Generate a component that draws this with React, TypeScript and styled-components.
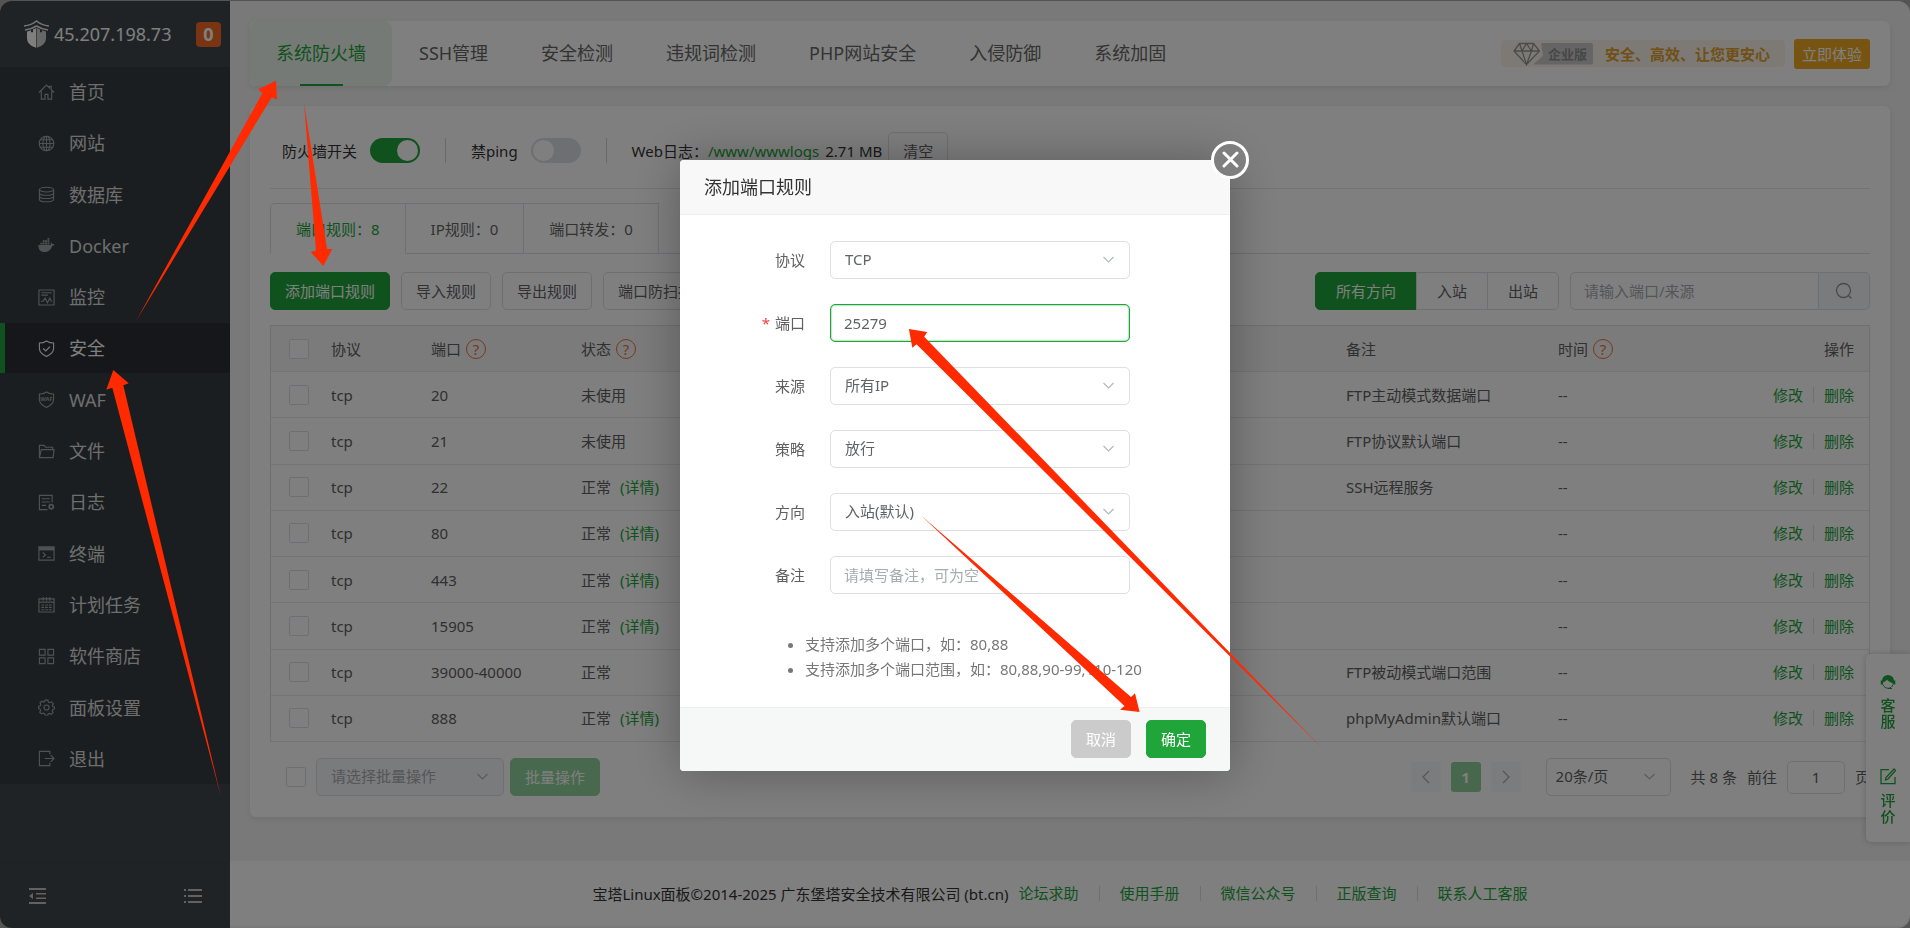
import React from 'react';
import styled, { createGlobalStyle, css } from 'styled-components';

const GlobalStyle = createGlobalStyle`
  *, *::before, *::after { box-sizing: border-box; }
  body { margin: 0; background: #a8a8aa; }
  body, button, input, select {
    font-family: "Noto Sans", "Noto Sans CJK SC", sans-serif;
    font-size: 15px;
    line-height: 20px;
    color: #606060;
  }
  button { cursor: pointer; }
  a { text-decoration: none; }
`;

const GREEN = '#20a53a';
const BORDER = '#dcdfe6';

/* ---------- shell ---------- */

const Shell = styled.div`
  display: flex;
  min-height: 100vh;
  border-top: 1px solid #a8a8aa;
`;

const Sidebar = styled.aside`
  display: flex;
  flex-direction: column;
  flex: 0 0 230px;
  background: #3f474c;
  border-radius: 12px 0 0 12px;
  overflow: hidden;
`;

const Brand = styled.div`
  display: flex;
  align-items: center;
  height: 66px;
  padding: 0 9px 0 24px;
  gap: 5px;
  color: #fff;
  font-size: 18px;
`;

const BrandName = styled.span`
  flex: 1;
`;

const Badge = styled.span`
  width: 25px;
  height: 25px;
  border-radius: 4px;
  background: #f26a22;
  font-size: 18px;
  font-weight: 700;
  line-height: 25px;
  text-align: center;
`;

const Menu = styled.nav`
  display: flex;
  flex-direction: column;
  justify-content: space-between;
  height: 717px;
  background: #363d41;
`;

const MenuLink = styled.a<{ $active?: boolean }>`
  display: flex;
  align-items: center;
  gap: 14px;
  height: 50px;
  padding-left: 33px;
  border-left: 5px solid transparent;
  font-size: 18px;
  color: #dcddde;
  svg { color: #a0a3a5; }
  ${(p) =>
    p.$active &&
    css`
      background: #2d2f35;
      border-left-color: ${GREEN};
      color: #fff;
      svg { color: #f4f4f4; }
    `}
`;

const SideTools = styled.div`
  display: flex;
  justify-content: space-between;
  align-items: center;
  height: 66px;
  margin-top: auto;
  padding: 0 28px;
  border-top: 1px solid #3b4348;
  color: #c4c4c4;
`;

const PlainButton = styled.button`
  display: flex;
  padding: 0;
  border: 0;
  background: none;
  color: inherit;
`;

const Main = styled.main`
  display: flex;
  flex-direction: column;
  flex: 1;
  min-width: 0;
  padding-bottom: 2px;
  background: #f2f2f2;
  border-radius: 0 12px 12px 0;
`;

const Card = styled.section`
  margin: 20px 20px 0;
  background: #fff;
  border-radius: 6px;
  box-shadow: 0 2px 6px rgba(0, 0, 0, 0.08);
`;

/* ---------- top navigation ---------- */

const NavCard = styled(Card)`
  display: flex;
  align-items: center;
  gap: 1px;
  height: 65px;
  padding-right: 20px;
`;

const NavLink = styled.a<{ $active?: boolean }>`
  position: relative;
  height: 65px;
  padding: 0 26px;
  border-radius: 8px;
  font-size: 18px;
  line-height: 65px;
  color: #666;
  white-space: nowrap;
  ${(p) =>
    p.$active &&
    css`
      color: ${GREEN};
      background: #edf5ee;
      &::after {
        content: '';
        position: absolute;
        left: calc(50% - 21px);
        bottom: 0;
        width: 43px;
        height: 2px;
        background: ${GREEN};
      }
    `}
`;

const Promo = styled.div`
  position: relative;
  display: flex;
  align-items: center;
  height: 27px;
  margin-left: auto;
  margin-right: 8px;
  padding: 0 15px 0 12px;
  border-radius: 4px;
  background: #fbf4ed;
  font-weight: 700;
  color: #e0a02c;
  white-space: nowrap;
`;

const PromoTag = styled.span`
  height: 22px;
  margin: 0 12px 0 -8px;
  padding: 0 6px 0 15px;
  border-radius: 0 2px 2px 0;
  background: #cbcbcb;
  clip-path: polygon(8px 0, 100% 0, 100% 100%, 0 100%, 10px 60%);
  font-size: 13px;
  line-height: 22px;
  color: #8f8f8f;
`;

const PromoButton = styled.button`
  height: 30px;
  padding: 0 8px;
  border: 0;
  border-radius: 3px;
  background: #efa922;
  color: #fff;
`;

/* ---------- generic controls ---------- */

const Button = styled.button<{ $kind?: 'primary' | 'faded' | 'grey' }>`
  height: 38px;
  padding: 0 14px;
  border: 1px solid ${BORDER};
  border-radius: 5px;
  background: #fff;
  color: #606266;
  white-space: nowrap;
  ${(p) => p.$kind === 'primary' && `background: ${GREEN}; border-color: ${GREEN}; color: #fff;`}
  ${(p) => p.$kind === 'faded' && 'background: #90d29d; border-color: #90d29d; color: #fff;'}
  ${(p) => p.$kind === 'grey' && 'background: #cbcbcb; border-color: #cbcbcb; color: #fff;'}
`;

const Switch = styled.input`
  appearance: none;
  width: 50px;
  height: 25px;
  margin: 0;
  padding: 2px;
  border-radius: 13px;
  background: ${BORDER};
  &::before {
    content: '';
    display: block;
    width: 21px;
    height: 21px;
    border-radius: 50%;
    background: #fff;
  }
  &:checked { background: ${GREEN}; }
  &:checked::before { margin-left: 25px; }
`;

const Check = styled.input`
  appearance: none;
  display: block;
  flex: none;
  width: 20px;
  height: 20px;
  margin: 0;
  border: 1px solid ${BORDER};
  border-radius: 2px;
  background: #fff;
`;

const SelectBox = styled.span<{ $width: number; $disabled?: boolean }>`
  position: relative;
  display: block;
  width: ${(p) => p.$width}px;
  select {
    appearance: none;
    width: 100%;
    height: 38px;
    padding: 0 30px 2px ${(p) => (p.$width < 150 ? 9 : 14)}px;
    border: 1px solid ${BORDER};
    border-radius: 5px;
    background: ${(p) => (p.$disabled ? '#f5f7fa' : '#fff')};
    color: ${(p) => (p.$disabled ? '#a8abb2' : '#606266')};
    opacity: 1;
  }
  svg {
    position: absolute;
    right: 16px;
    top: 13px;
    color: #b4b7bd;
    pointer-events: none;
  }
`;

const TextInput = styled.input<{ $focused?: boolean }>`
  width: 300px;
  height: 38px;
  padding: 0 13px;
  border: 1px solid ${(p) => (p.$focused ? GREEN : BORDER)};
  border-radius: 5px;
  box-shadow: ${(p) => (p.$focused ? 'inset 0 0 2px #20a53a' : 'none')};
  background: #fff;
  color: #606266;
  outline: none;
  &::placeholder { color: #a8abb2; }
`;

/* ---------- content card ---------- */

const Content = styled(Card)`
  padding: 26px 20px 21px;
`;

const Switches = styled.div`
  display: flex;
  align-items: center;
  height: 57px;
  padding: 0 12px 19px;
  border-bottom: 1px solid #e6e6e6;
  color: #333;
`;

const SwitchLabel = styled.label`
  display: flex;
  align-items: center;
  gap: 13px;
`;

const Rule = styled.i`
  width: 1px;
  height: 25px;
  margin: 0 25px;
  background: #d0d0d4;
`;

const LogLine = styled.span`
  display: flex;
  align-items: center;
  gap: 6px;
`;

const Green = styled.a`
  color: ${GREEN};
`;

const Tabs = styled.div`
  display: flex;
  margin-top: 14px;
  &::after {
    content: '';
    flex: 1;
    border-bottom: 1px solid ${BORDER};
  }
`;

const Tab = styled.button<{ $active?: boolean }>`
  height: 51px;
  min-width: 118px;
  padding: 0 25px;
  border: 1px solid ${BORDER};
  border-left-width: 0;
  background: #fff;
  color: ${(p) => (p.$active ? GREEN : '#666')};
  white-space: nowrap;
  &:first-child {
    border-left-width: 1px;
    border-top-left-radius: 5px;
  }
  ${(p) => p.$active && 'border-bottom-color: #fff;'}
`;

const Toolbar = styled.div`
  display: flex;
  align-items: center;
  gap: 11px;
  margin: 18px 0 15px;
`;

const Grow = styled.span`
  flex: 1;
`;

const Segments = styled.div`
  display: flex;
  button { border-radius: 0; margin-left: -1px; padding: 0 20px; }
  button:first-child { border-radius: 5px 0 0 5px; margin: 0; }
  button:last-child { border-radius: 0 5px 5px 0; }
`;

const Search = styled.div`
  display: flex;
  width: 300px;
  input { flex: 1; min-width: 0; border-radius: 5px 0 0 5px; }
  button {
    display: flex;
    align-items: center;
    justify-content: center;
    width: 51px;
    height: 38px;
    padding: 0;
    border: 1px solid ${BORDER};
    border-left: 0;
    border-radius: 0 5px 5px 0;
    background: #f5f7fa;
    color: #909399;
  }
`;

const Table = styled.table`
  width: 100%;
  height: 417px;
  table-layout: fixed;
  border-collapse: separate;
  border-spacing: 0;
  border: 1px solid ${BORDER};
  border-bottom: 0;
  th, td {
    height: 46px;
    padding: 0 15px;
    border-bottom: 1px solid #e6e8ec;
    font-weight: 400;
    text-align: left;
    white-space: nowrap;
  }
  th { background: #f7f7f7; }
  th:first-child, td:first-child { padding: 0 0 0 18px; }
  th:last-child, td:last-child { text-align: right; }
`;

const HeadCell = styled.span`
  display: flex;
  align-items: center;
  gap: 5px;
`;

const Help = styled.a`
  width: 20px;
  height: 20px;
  border: 1px solid #f0703a;
  border-radius: 50%;
  line-height: 18px;
  text-align: center;
  color: #f0703a;
`;

const Actions = styled.span`
  display: inline-flex;
  align-items: center;
  a + a {
    margin-left: 10px;
    padding-left: 10px;
    border-left: 1px solid ${BORDER};
    line-height: 16px;
  }
`;

const Detail = styled(Green)`
  margin-left: 9px;
`;

const Bottom = styled.div`
  display: flex;
  align-items: center;
  gap: 6px;
  margin-top: 16px;
  padding-left: 16px;
`;

const BatchSelect = styled.span`
  margin-left: 4px;
`;

const Pager = styled.nav`
  display: flex;
  align-items: center;
  gap: 10px;
  margin-left: auto;
  white-space: nowrap;
`;

const PageButton = styled.button<{ $current?: boolean }>`
  display: flex;
  align-items: center;
  justify-content: center;
  width: 30px;
  height: 30px;
  padding: 0;
  border: 0;
  border-radius: 3px;
  background: ${(p) => (p.$current ? '#8ed09b' : '#f6f8fb')};
  color: ${(p) => (p.$current ? '#fff' : '#a8abb2')};
  font-weight: 700;
`;

const PageSize = styled.span`
  margin: 0 10px 0 15px;
`;

const Jump = styled.label`
  display: flex;
  align-items: center;
  gap: 10px;
  input { width: 58px; height: 33px; text-align: center; padding: 0; }
`;

const Footer = styled.footer`
  display: flex;
  align-items: center;
  justify-content: center;
  height: 65px;
  margin-top: auto;
  background: #fff;
  border-radius: 0 0 12px 0;
  color: #333;
  a {
    padding: 0 20px;
    border-left: 1px solid ${BORDER};
    line-height: 15px;
  }
  a:first-of-type { padding-left: 10px; border: 0; }
`;

const SideFloat = styled.div`
  position: fixed;
  right: 0;
  bottom: 86px;
  display: flex;
  flex-direction: column;
  align-items: center;
  gap: 39px;
  width: 44px;
  height: 188px;
  padding-top: 20px;
  border-radius: 5px 0 0 5px;
  background: #fff;
  box-shadow: 0 0 6px rgba(0, 0, 0, 0.2);
  a {
    display: flex;
    flex-direction: column;
    align-items: center;
    width: 15px;
    gap: 7px;
    font-weight: 500;
    line-height: 16px;
    color: ${GREEN};
  }
`;

/* ---------- dialog ---------- */

const Mask = styled.div`
  position: fixed;
  inset: 0;
  display: flex;
  align-items: center;
  justify-content: center;
  padding-top: 2px;
  background: rgba(0, 0, 0, 0.5);
`;

const Dialog = styled.form`
  position: relative;
  width: 550px;
  border-radius: 4px;
  background: #fff;
  box-shadow: 1px 1px 50px rgba(0, 0, 0, 0.3);
`;

const DialogTitle = styled.h1`
  height: 55px;
  margin: 0;
  padding-left: 24px;
  border-bottom: 1px solid #eee;
  border-radius: 4px 4px 0 0;
  background: #f8f8f8;
  font-size: 18px;
  font-weight: 400;
  line-height: 55px;
  color: #333;
`;

const CloseButton = styled.button`
  position: absolute;
  top: -19px;
  right: -19px;
  display: flex;
  align-items: center;
  justify-content: center;
  width: 38px;
  height: 38px;
  padding: 0;
  border: 3px solid #fff;
  border-radius: 50%;
  background: #7f7f7f;
  color: #fff;
`;

const Fields = styled.div`
  display: flex;
  flex-direction: column;
  gap: 25px;
  padding: 26px 0 38px;
`;

const Field = styled.div`
  display: flex;
  align-items: center;
  gap: 25px;
  label { width: 125px; text-align: right; }
`;

const Star = styled.span`
  margin-right: 5px;
  color: #f04040;
`;

const Tips = styled.ul`
  margin: 0;
  padding: 0 0 25px 125px;
  color: #777;
  line-height: 25px;
`;

const DialogFooter = styled.div`
  display: flex;
  align-items: center;
  justify-content: flex-end;
  gap: 15px;
  height: 64px;
  padding-right: 24px;
  border-top: 1px solid #edf0ee;
  border-radius: 0 0 4px 4px;
  background: #f6f8f7;
`;

const Annotations = styled.svg`
  position: absolute;
  left: 0;
  top: 0;
  fill: #ff2a00;
  pointer-events: none;
`;

/* ---------- icons ---------- */

const menuIcons: Record<string, React.ReactNode> = {
  home: <path d="M1 9 9 1.2l3 3V2.500h2v3.600L17 9M3.500 7.500V16h4v-5h3v5h4V7.500" />,
  globe: (
    <>
      <circle cx="9" cy="9" r="7.700" />
      <ellipse cx="9" cy="9" rx="3.800" ry="7.700" />
      <path d="M9 1.300v15.400M1.300 9h15.400M2.300 5h13.400M2.300 13h13.400" />
    </>
  ),
  database: (
    <>
      <ellipse cx="9" cy="3.800" rx="7.500" ry="2.500" />
      <path d="M1.500 3.800v10.400c0 3.300 15 3.300 15 0V3.800M1.500 7.300c0 3.300 15 3.300 15 0M1.500 10.800c0 3.300 15 3.300 15 0" />
    </>
  ),
  docker: (
    <path
      fill="currentColor"
      stroke="none"
      d="M.5 8.500h12.800c.6-.8.500-2.100 0-3 1 .4 1.700 1.200 1.900 2 .9-.2 1.800 0 2.500.5-.5 1-1.500 1.500-2.700 1.500-1.400 4.300-4.500 6.500-8.200 6.500C2.500 16 .2 13 .5 8.500ZM2.500 6h2v2h-2Zm2.500 0h2v2H5Zm2.500 0h2v2h-2ZM10 6h2v2h-2ZM5 3.500h2v2H5Zm2.500 0h2v2h-2Zm2.500 0h2v2h-2Zm0-2.500h2v2h-2Z"
    />
  ),
  monitor: (
    <>
      <path d="M1 1h16v16H1ZM3.500 4h11M3.500 6.500h7" />
      <path d="m3 13 2.500 0 2-3.500 2.500 5 2.500-5 1.500 3.500H15" />
    </>
  ),
  shield: (
    <>
      <path d="M9 1c2.500 1.600 5 2.200 7.500 2.200V9c0 4.300-3.500 6.600-7.500 8.500C5 15.600 1.500 13.300 1.500 9V3.200C4 3.200 6.500 2.600 9 1Z" />
      <path d="m5.500 9 2.700 2.600 4.500-4.600" />
    </>
  ),
  waf: (
    <>
      <path d="M9 1c2.500 1.600 5 2.200 7.500 2.200V9c0 4.300-3.500 6.600-7.500 8.500C5 15.600 1.500 13.300 1.500 9V3.200C4 3.200 6.500 2.600 9 1Z" />
      <text x="9" y="11" textAnchor="middle" fontSize="6" fontWeight="700" fill="currentColor" stroke="none">WAF</text>
    </>
  ),
  folder: <path d="M1.500 15.500v-13h5l1.500 2h7.500v2.500M1.500 15.500 3.500 7H17l-1 8.500Z" />,
  log: (
    <>
      <path d="M15 9V1.500H1.500v15h8.500M4 5h8.500M4 8.500h8.500M4 12h4.500" />
      <circle cx="14" cy="13.500" r="2.200" strokeWidth="1.800" />
    </>
  ),
  terminal: (
    <>
      <path d="M1 2h16v14H1Z" />
      <path d="M1 4h16" strokeWidth="3.500" />
      <path d="m5 8 3 2.500-3 2.500M9.500 13h4" />
    </>
  ),
  calendar: (
    <>
      <path d="M1 3h16v14H1ZM1 6.500h16M5.500 1v4M12.500 1v4M9 1v4" />
      <path d="M3.500 9.500h11M3.500 12h11M3.500 14.500h11" strokeDasharray="3 1" />
    </>
  ),
  grid: <path d="M1.500 1.500h6v6h-6ZM10.500 1.500h6v6h-6ZM1.500 10.500h6v6h-6ZM10.500 10.500h6v6h-6Z" />,
  gear: (
    <>
      <circle cx="9" cy="9" r="2.700" />
      <path d="M7.500 1.200h3l.5 2 1.500.7 2-.9 1.800 2-1 1.900.5 1.300 1.700.3v2l-1.800.6-.6 1.500.9 1.800-2 1.800-1.900-1-1.200.5-.5 1.300h-3l-.5-1.500-1.400-.6-1.800.9-1.900-2 .9-1.700-.5-1.400L.6 10V7.800l1.800-.5.6-1.500-.9-1.700L4 2.300l1.800.9 1.200-.5Z" />
    </>
  ),
  exit: <path d="M12.500 4.500v-3h-11v15h11v-3M7 9h10M13.500 5.500 17 9l-3.500 3.500" />,
};

const menu: [string, string][] = [
  ['home', '首页'],
  ['globe', '网站'],
  ['database', '数据库'],
  ['docker', 'Docker'],
  ['monitor', '监控'],
  ['shield', '安全'],
  ['waf', 'WAF'],
  ['folder', '文件'],
  ['log', '日志'],
  ['terminal', '终端'],
  ['calendar', '计划任务'],
  ['grid', '软件商店'],
  ['gear', '面板设置'],
  ['exit', '退出'],
];

const Chevron = () => (
  <svg width="11" height="11" viewBox="0 0 11 11" fill="none" stroke="currentColor" strokeWidth="1.200">
    <path d="m.5 3 5 5 5-5" />
  </svg>
);

/* ---------- data ---------- */

const navItems = ['系统防火墙', 'SSH管理', '安全检测', '违规词检测', 'PHP网站安全', '入侵防御', '系统加固'];

type Row = { port: string; status: string; detail: boolean; note: string };

const rows: Row[] = [
  { port: '20', status: '未使用', detail: false, note: 'FTP主动模式数据端口' },
  { port: '21', status: '未使用', detail: false, note: 'FTP协议默认端口' },
  { port: '22', status: '正常', detail: true, note: 'SSH远程服务' },
  { port: '80', status: '正常', detail: true, note: '' },
  { port: '443', status: '正常', detail: true, note: '' },
  { port: '15905', status: '正常', detail: true, note: '' },
  { port: '39000-40000', status: '正常', detail: false, note: 'FTP被动模式端口范围' },
  { port: '888', status: '正常', detail: true, note: 'phpMyAdmin默认端口' },
];

const footerLinks = ['论坛求助', '使用手册', '微信公众号', '正版查询', '联系人工客服'];

const SelectField = ({ id, label, value }: { id: string; label: string; value: string }) => (
  <Field>
    <label htmlFor={id}>{label}</label>
    <SelectBox $width={300}>
      <select id={id}>
        <option>{value}</option>
      </select>
      <Chevron />
    </SelectBox>
  </Field>
);

const SideMenu = () => (
  <Sidebar>
    <Brand>
      <svg width="25" height="28" viewBox="0 0 25 28" fill="none" stroke="#e8e8e8" strokeWidth="1.600">
        <path d="M0 6c5-.5 9-2 12.500-5C16 4 20 5.500 25 6M1 10c4.500-.5 8-1.700 11.500-4 3.500 2.300 7 3.500 11.500 4" />
        <path fill="#fff" stroke="none" d="M3 11.500c1.500-.2 2.600-.6 4-1.200v2h2V9.600l3.200-1.500v19.600C6.500 26 3 23 3 18Z" />
        <path fill="#cfcfcf" stroke="none" d="M22 11.500c-1.500-.2-2.600-.6-4-1.200v2h-2V9.600l-3.200-1.500v19.600C18.500 26 22 23 22 18Z" />
      </svg>
      <BrandName>45.207.198.73</BrandName>
      <Badge>0</Badge>
    </Brand>
    <Menu>
      {menu.map(([icon, label]) => (
        <MenuLink key={label} href="#" $active={icon === 'shield'}>
          <svg width="17" height="17" viewBox="0 0 18 18" fill="none" stroke="currentColor" strokeWidth="1.200">
            {menuIcons[icon]}
          </svg>
          {label}
        </MenuLink>
      ))}
    </Menu>
    <SideTools>
      <PlainButton aria-label="收起菜单">
        <svg width="18" height="18" viewBox="0 0 18 18" fill="currentColor">
          <path d="M1 1h17v2H1ZM8 6h10v1.500H8ZM8 10.500h10V12H8ZM1 15h17v2H1ZM5 6v6L1 9Z" />
        </svg>
      </PlainButton>
      <PlainButton aria-label="菜单列表">
        <svg width="18" height="16" viewBox="0 0 18 16" fill="currentColor">
          <path d="M0 1h2v2H0ZM4 1h14v2H4ZM0 7h2v2H0ZM4 7h14v2H4ZM0 13h2v2H0ZM4 13h14v2H4Z" />
        </svg>
      </PlainButton>
    </SideTools>
  </Sidebar>
);

const TopNav = () => (
  <NavCard>
    {navItems.map((item, i) => (
      <NavLink key={item} href="#" $active={i === 0}>
        {item}
      </NavLink>
    ))}
    <Promo>
      <svg width="28" height="24" viewBox="0 0 28 24" fill="none" stroke="#979797" strokeWidth="1.300">
        <path d="M6.500 1.500h14L26.500 9l-13 13.500L1 9ZM1 9h25.500M6.500 1.500 9 9l4.500 13.500L18.500 9l2-7.500M9 9l4.500-7.500L18.500 9" />
      </svg>
      <PromoTag>企业版</PromoTag>
      安全、高效、让您更安心
    </Promo>
    <PromoButton>立即体验</PromoButton>
  </NavCard>
);

const RuleTable = () => (
  <Table>
    <colgroup>
      <col style={{ width: 45 }} />
      <col style={{ width: 100 }} />
      <col style={{ width: 150 }} />
      <col />
      <col style={{ width: 212 }} />
      <col style={{ width: 212 }} />
      <col style={{ width: 114 }} />
    </colgroup>
    <thead>
      <tr>
        <th><Check type="checkbox" aria-label="全选" /></th>
        <th>协议</th>
        <th><HeadCell>端口<Help href="#">?</Help></HeadCell></th>
        <th><HeadCell>状态<Help href="#">?</Help></HeadCell></th>
        <th>备注</th>
        <th><HeadCell>时间<Help href="#">?</Help></HeadCell></th>
        <th>操作</th>
      </tr>
    </thead>
    <tbody>
      {rows.map((row) => (
        <tr key={row.port}>
          <td><Check type="checkbox" aria-label={row.port} /></td>
          <td>tcp</td>
          <td>{row.port}</td>
          <td>
            {row.status}
            {row.detail && <Detail href="#">(详情)</Detail>}
          </td>
          <td>{row.note}</td>
          <td>--</td>
          <td>
            <Actions>
              <Green href="#">修改</Green>
              <Green href="#">删除</Green>
            </Actions>
          </td>
        </tr>
      ))}
    </tbody>
  </Table>
);

const AddRuleDialog = () => (
  <Mask>
    <Dialog role="dialog" aria-labelledby="dialog-title" onSubmit={(e) => e.preventDefault()}>
      <DialogTitle id="dialog-title">添加端口规则</DialogTitle>
      <CloseButton type="button" aria-label="关闭">
        <svg width="17" height="17" viewBox="0 0 17 17" fill="none" stroke="currentColor" strokeWidth="3" strokeLinecap="round">
          <path d="m2 2 13 13M15 2 2 15" />
        </svg>
      </CloseButton>
      <Fields>
        <SelectField id="protocol" label="协议" value="TCP" />
        <Field>
          <label htmlFor="port"><Star>*</Star>端口</label>
          <TextInput id="port" defaultValue="25279" $focused />
        </Field>
        <SelectField id="source" label="来源" value="所有IP" />
        <SelectField id="policy" label="策略" value="放行" />
        <SelectField id="direction" label="方向" value="入站(默认)" />
        <Field>
          <label htmlFor="note">备注</label>
          <TextInput id="note" placeholder="请填写备注，可为空" />
        </Field>
      </Fields>
      <Tips>
        <li>支持添加多个端口，如：80,88</li>
        <li>支持添加多个端口范围，如：80,88,90-99,110-120</li>
      </Tips>
      <DialogFooter>
        <Button type="button" $kind="grey">取消</Button>
        <Button type="submit" $kind="primary">确定</Button>
      </DialogFooter>
    </Dialog>
  </Mask>
);

export default function App() {
  return (
    <>
      <GlobalStyle />
      <Shell>
        <SideMenu />
        <Main>
          <TopNav />
          <Content>
            <Switches>
              <SwitchLabel>
                防火墙开关
                <Switch type="checkbox" defaultChecked />
              </SwitchLabel>
              <Rule />
              <SwitchLabel>
                禁ping
                <Switch type="checkbox" />
              </SwitchLabel>
              <Rule />
              <LogLine>
                <span>Web日志：<Green href="#">/www/wwwlogs</Green></span>
                <span>2.71 MB</span>
                <Button>清空</Button>
              </LogLine>
            </Switches>
            <Tabs>
              <Tab $active>端口规则：8</Tab>
              <Tab>IP规则：0</Tab>
              <Tab>端口转发：0</Tab>
            </Tabs>
            <Toolbar>
              <Button $kind="primary">添加端口规则</Button>
              <Button>导入规则</Button>
              <Button>导出规则</Button>
              <Button>端口防扫描</Button>
              <Grow />
              <Segments>
                <Button $kind="primary">所有方向</Button>
                <Button>入站</Button>
                <Button>出站</Button>
              </Segments>
              <Search>
                <TextInput placeholder="请输入端口/来源" aria-label="搜索" />
                <button aria-label="搜索">
                  <svg width="18" height="18" viewBox="0 0 18 18" fill="none" stroke="currentColor" strokeWidth="1.300">
                    <circle cx="8.500" cy="8.500" r="7" />
                    <path d="m13.500 13.500 3 3" />
                  </svg>
                </button>
              </Search>
            </Toolbar>
            <RuleTable />
            <Bottom>
              <Check type="checkbox" aria-label="全选" />
              <BatchSelect>
                <SelectBox $width={188} $disabled>
                  <select disabled aria-label="批量操作">
                    <option>请选择批量操作</option>
                  </select>
                  <Chevron />
                </SelectBox>
              </BatchSelect>
              <Button $kind="faded">批量操作</Button>
              <Pager>
                <PageButton aria-label="上一页">
                  <svg width="8" height="14" viewBox="0 0 8 14" fill="none" stroke="currentColor" strokeWidth="1.200"><path d="M7 1 1 7l6 6" /></svg>
                </PageButton>
                <PageButton $current>1</PageButton>
                <PageButton aria-label="下一页">
                  <svg width="8" height="14" viewBox="0 0 8 14" fill="none" stroke="currentColor" strokeWidth="1.200"><path d="m1 1 6 6-6 6" /></svg>
                </PageButton>
                <PageSize>
                  <SelectBox $width={125}>
                    <select aria-label="每页条数">
                      <option>20条/页</option>
                    </select>
                    <Chevron />
                  </SelectBox>
                </PageSize>
                <span>共 8 条</span>
                <Jump>
                  前往
                  <TextInput defaultValue="1" />
                  页
                </Jump>
              </Pager>
            </Bottom>
          </Content>
          <Footer>
            宝塔Linux面板©2014-2025 广东堡塔安全技术有限公司 (bt.cn)
            {footerLinks.map((link) => (
              <Green key={link} href="#">{link}</Green>
            ))}
          </Footer>
        </Main>
      </Shell>
      <SideFloat>
        <a href="#">
          <svg width="16" height="16" viewBox="0 0 16 16">
            <path fill={GREEN} d="M8 1a6 6 0 0 1 6 5.500h1.300v4H13.500C12 8 9 8.500 7 5.500 6 7.500 4 8 3 8.500v2H.700v-4H2A6 6 0 0 1 8 1Z" />
            <path fill="none" stroke={GREEN} d="M3 10.500c1.500 5 8.500 5 10 0M8 14.500h4" />
          </svg>
          客服
        </a>
        <a href="#">
          <svg width="16" height="17" viewBox="0 0 16 17" fill="none" stroke={GREEN} strokeWidth="1.300">
            <path d="M9 1.700H1v14h14V9M14 1l1.500 1.500L8 11l-2.500 1L6 9.500Z" />
          </svg>
          评价
        </a>
      </SideFloat>
      <AddRuleDialog />
      <Annotations width="1400" height="820" viewBox="0 0 1400 820" aria-hidden="true">
        <path d="M136 321 262.500 93 258.300 89.300 276 80.700 277 99.700 271.700 97.300Z" />
        <path d="M304 103 327 249 332.300 249 323.300 266 310.700 252 316 250.600Z" />
        <path d="M221 797 112.300 387.700 106.300 389.700 113.300 370 128.700 383.300 123.300 385.300Z" />
        <path d="M1322 748 916.500 344.300 912.300 347.700 908.900 329 927.200 332 924.200 336.700Z" />
        <path d="M920.800 515.300 1131 697 1135 693.300 1139.600 712 1120 709.700 1124.500 706Z" />
      </Annotations>
    </>
  );
}
